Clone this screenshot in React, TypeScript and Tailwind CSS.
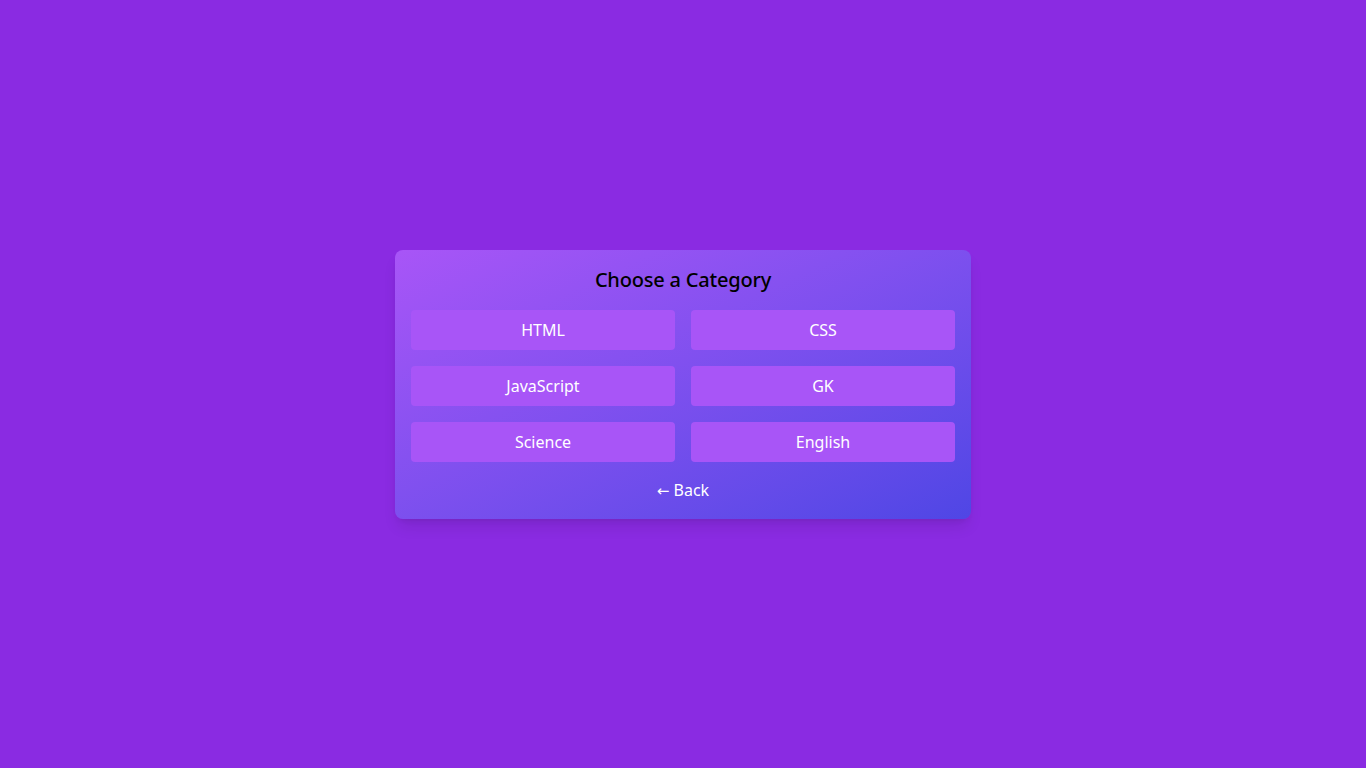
const CATEGORIES = ['HTML', 'CSS', 'JavaScript', 'GK', 'Science', 'English']

export default function App() {
  return (
    <main
      className="min-h-screen w-full flex items-center justify-center bg-[#8a2be2]"
      style={{ fontFamily: '"Segoe UI", "Noto Sans", "Open Sans", sans-serif' }}
    >
      <div className="w-[576px] rounded-lg p-4 bg-gradient-to-br from-[#a855f7] to-[#4f46e5] shadow-lg">
        <h2 className="text-xl leading-7 font-medium text-center text-black mb-4 tracking-[-0.2px]">Choose a Category</h2>

        {/* カテゴリ */}
        <div className="grid grid-cols-2 gap-4">
          {CATEGORIES.map(c => (
            <button
              key={c}
              className="h-10 rounded bg-[#a855f7] text-white text-base hover:bg-[#9333ea]"
            >
              {c}
            </button>
          ))}
        </div>

        <div className="mt-4 flex justify-center">
          <button className="text-white text-base leading-6">
            <span className="font-['DejaVu_Sans',sans-serif] text-[15px]">←</span> Back
          </button>
        </div>
      </div>
    </main>
  )
}
